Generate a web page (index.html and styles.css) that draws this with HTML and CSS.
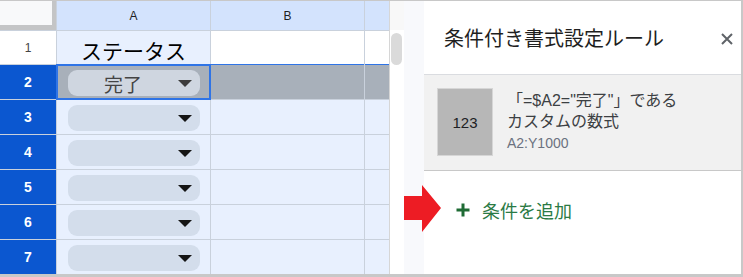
FILE: index.html
```html
<!DOCTYPE html>
<html lang="ja">
<head>
  <meta charset="UTF-8" />
  <meta name="viewport" content="width=device-width, initial-scale=1.0"/>
  <title>条件付き書式設定ルール</title>
  <link rel="stylesheet" href="styles.css">
</head>
<body>
  <div class="frame">
    <div class="sheet">
      <div class="grid">
        <div class="corner"><div class="corner-inner"></div></div>
        <div class="col-head">A</div>
        <div class="col-head">B</div>
        <div class="col-head"></div>

        <div class="row-head plain">1</div>
        <div class="cell title-cell">ステータス</div>
        <div class="cell blank"></div>
        <div class="cell blank"></div>

        <div class="row-head">2</div>
        <div class="cell picked active">
          <div class="chip"><span class="chip-text">完了</span><span class="caret"></span></div>
        </div>
        <div class="cell picked"></div>
        <div class="cell picked"></div>

        <div class="row-head">3</div>
        <div class="cell"><div class="chip"><span class="chip-text"></span><span class="caret"></span></div></div>
        <div class="cell"></div>
        <div class="cell"></div>

        <div class="row-head">4</div>
        <div class="cell"><div class="chip"><span class="chip-text"></span><span class="caret"></span></div></div>
        <div class="cell"></div>
        <div class="cell"></div>

        <div class="row-head">5</div>
        <div class="cell"><div class="chip"><span class="chip-text"></span><span class="caret"></span></div></div>
        <div class="cell"></div>
        <div class="cell"></div>

        <div class="row-head">6</div>
        <div class="cell"><div class="chip"><span class="chip-text"></span><span class="caret"></span></div></div>
        <div class="cell"></div>
        <div class="cell"></div>

        <div class="row-head">7</div>
        <div class="cell"><div class="chip"><span class="chip-text"></span><span class="caret"></span></div></div>
        <div class="cell"></div>
        <div class="cell"></div>
      </div>
    </div>

    <div class="scroll">
      <div class="scroll-top"></div>
      <div class="thumb"></div>
    </div>
    <div class="gutter"></div>

    <div class="panel">
      <div class="panel-head">
        <span class="panel-title">条件付き書式設定ルール</span>
        <svg class="close" width="14" height="14" viewBox="0 0 14 14">
          <path d="M2 2 L12 12 M12 2 L2 12" stroke="#5f6368" stroke-width="2" fill="none"/>
        </svg>
      </div>

      <div class="rule">
        <div class="preview">123</div>
        <div class="rule-text">
          <div class="rule-line">「=$A2="完了"」である</div>
          <div class="rule-line">カスタムの数式</div>
          <div class="rule-range">A2:Y1000</div>
        </div>
      </div>

      <div class="add">
        <svg width="14" height="14" viewBox="0 0 14 14">
          <path d="M7 0.5 V13.5 M0.5 7 H13.5" stroke="#1e6b34" stroke-width="3" fill="none"/>
        </svg>
        <span class="add-text">条件を追加</span>
      </div>
    </div>

    <svg class="pointer" width="37" height="47" viewBox="0 0 37 47">
      <polygon points="0,11 18,11 18,0 37,23 18,47 18,35 0,35" fill="#ed1c24"/>
    </svg>
  </div>
</body>
</html>
```

FILE: styles.css
```css
body {
  margin: 0;
  font-family: "Liberation Sans", "Noto Sans CJK JP", sans-serif;
  background: #fff;
}

.frame {
  position: relative;
  display: flex;
  width: 741px;
  height: 273px;
  border-top: 1px solid #c8c8c8;
  border-right: 2px solid #c8c8c8;
  border-bottom: 3px solid #c8c8c8;
  overflow: hidden;
}

/* spreadsheet */
.sheet {
  width: 389px;
  border-right: 1px solid #d6d6d6;
}

.grid {
  display: grid;
  grid-template-columns: 56px 153px 153px 24px;
  grid-template-rows: 29px 33px repeat(6, 34px);
  gap: 1px;
  background: #c9d1dc;
  height: 273px;
}

.corner {
  background: #c4c5c6;
}

.corner-inner {
  width: 52px;
  height: 24px;
  background: #f8f9fa;
}

.col-head {
  background: #d3e3fd;
  color: #1f1f1f;
  font-size: 12px;
  display: flex;
  align-items: center;
  justify-content: center;
}

.row-head {
  background: #0b57d0;
  color: #fff;
  font-weight: bold;
  font-size: 14px;
  display: flex;
  align-items: center;
  justify-content: center;
}

.row-head.plain {
  background: #fff;
  color: #444;
  font-weight: normal;
  font-size: 12px;
}

.cell {
  background: #e8f0fe;
}

.cell.blank {
  background: #fff;
}

.title-cell {
  display: flex;
  align-items: center;
  justify-content: center;
  padding-top: 4px;
  box-sizing: border-box;
  font-size: 21px;
  color: #000;
}

.cell.picked {
  background: #a8b0ba;
  box-shadow: 0 -1px 0 #2f74e6;
}

.cell.active {
  box-shadow: 0 0 0 1px #2f74e6, inset 0 0 0 1px #2f74e6;
}

.chip {
  display: flex;
  align-items: center;
  height: 26px;
  margin: 5px 10px 0 11px;
  padding-right: 8px;
  border-radius: 9px;
  background: #d3ddeb;
}

.picked .chip {
  background: #cfd6e0;
}

.chip-text {
  flex: 1;
  text-align: center;
  font-size: 19px;
  color: #444;
}

.caret {
  width: 0;
  height: 0;
  border-left: 7px solid transparent;
  border-right: 7px solid transparent;
  border-top: 7px solid #151515;
}

.picked .caret {
  border-top-color: #3c3c3c;
}

.scroll {
  width: 14px;
  background: #fff;
}

.scroll-top {
  height: 29px;
  background: #f8f8f8;
}

.thumb {
  width: 11px;
  height: 32px;
  margin: 3px 0 0 1px;
  border-radius: 6px;
  background: #dadada;
}

.gutter {
  width: 20px;
  background: #f8f9fc;
}

/* side panel */
.panel {
  flex: 1;
  display: flex;
  flex-direction: column;
  background: #fff;
}

.panel-head {
  height: 73px;
  display: flex;
  align-items: center;
  justify-content: space-between;
  padding: 0 7px 0 20px;
  border-bottom: 1px solid #dadce0;
}

.panel-title {
  font-size: 20px;
  color: #1f1f1f;
}

.close {
  margin-top: 3px;
}

.rule {
  height: 82px;
  display: flex;
  gap: 14px;
  padding: 13px 0 0 13px;
  background: #f1f1f1;
  border-bottom: 1px solid #c8c8c8;
}

.preview {
  width: 54px;
  height: 66px;
  border: 1px solid #d6d6d6;
  background: #b7b7b7;
  display: flex;
  align-items: center;
  justify-content: center;
  font-size: 15px;
  color: #202124;
}

.rule-text {
  margin-top: 2px;
}

.rule-line {
  font-size: 16px;
  line-height: 21px;
  color: #3c4043;
}

.rule-range {
  font-size: 14px;
  line-height: 22px;
  color: #6b7280;
}

.add {
  display: flex;
  align-items: center;
  gap: 12px;
  height: 26px;
  margin: 26px 0 0 32px;
}

.add-text {
  font-size: 18px;
  color: #2b7a45;
}

.pointer {
  position: absolute;
  left: 404px;
  top: 184px;
}
```
